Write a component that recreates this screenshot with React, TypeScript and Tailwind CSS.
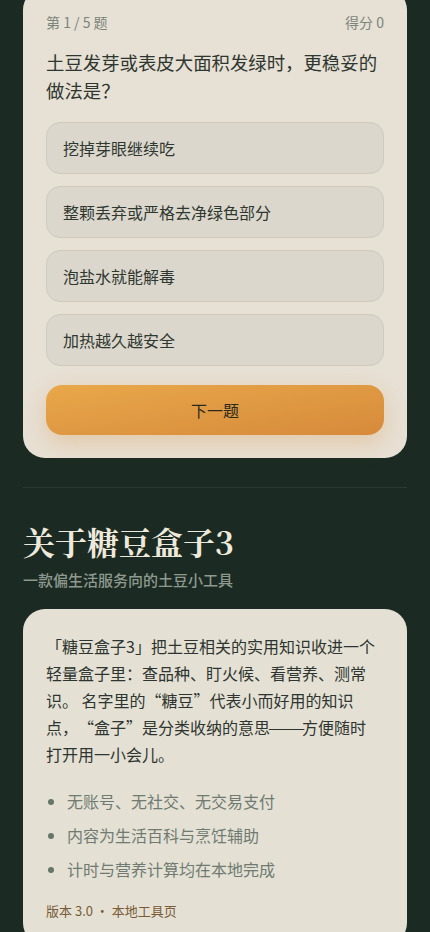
const options = ["挖掉芽眼继续吃", "整颗丢弃或严格去净绿色部分", "泡盐水就能解毒", "加热越久越安全"];

const points = ["无账号、无社交、无交易支付", "内容为生活百科与烹饪辅助", "计时与营养计算均在本地完成"];

const sans = { fontFamily: '"Noto Sans CJK SC", "Liberation Sans", sans-serif' };

// quotes take a full em box, as in the reference
function Open() {
  return <span className="inline-block w-[1em] text-right">“</span>;
}
function Close() {
  return <span className="inline-block w-[1em] text-left">”</span>;
}

export default function App() {
  return (
    <div
      className="min-h-[932px] overflow-hidden bg-[#1b2b23] px-[23px] pb-10"
      style={sans}
    >
      {/* Quiz card */}
      <section className="-mt-[12px] rounded-[22px] bg-[#e7e0d4] px-[23px] pb-[23px] pt-6">
        <div className="flex h-5 items-center justify-between text-[14px] text-[#7b857b]">
          <span>第 1 / 5 题</span>
          <span>得分 0</span>
        </div>
        <p className="mt-4 text-[18.4px] leading-[28px] text-[#2e3630]">
          土豆发芽或表皮大面积发绿时，更稳妥的做法是？
        </p>
        <div className="mt-[18px] flex flex-col gap-3">
          {options.map((o) => (
            <button
              key={o}
              type="button"
              className="flex h-[52px] items-center rounded-[14px] border border-[#cfcabe] bg-[#dcd7cc] px-4 text-left text-[16px] text-[#2f3731]"
            >
              {o}
            </button>
          ))}
        </div>
        <button
          type="button"
          className="mt-[19px] flex h-[50px] w-full items-center justify-center rounded-[16px] bg-gradient-to-br from-[#e9a84a] to-[#d68a3b] text-[16px] text-[#2a2a1e] shadow-[0_8px_22px_rgba(214,139,58,0.28)]"
        >
          下一题
        </button>
      </section>

      <div className="mt-[29px] h-px bg-[#2b3b32]" />

      {/* About */}
      <h1
        className="mt-[34px] text-[32px] font-bold leading-[38px] text-[#efe9dc]"
        style={{ fontFamily: '"Noto Serif CJK SC", "Liberation Serif", serif' }}
      >
        关于糖豆盒子3
      </h1>
      <p className="mt-[9px] text-[15px] font-medium leading-[22px] text-[#8e998f]">
        一款偏生活服务向的土豆小工具
      </p>

      <section className="mt-[18px] rounded-[22px] bg-[#e4e0d4] px-[23px] pb-6 pt-6">
        <p className="pr-[3px] text-[16px] leading-[27px] text-[#2e3530]">
          「糖豆盒子3」把土豆相关的实用知识收进一个轻量盒子里：查品种、盯火候、看营养、测常识。 名字里的<Open />糖豆<Close />代表小而好用的知识点，<Open />盒子<Close />是分类收纳的意思
          <span className="inline-block w-[2em] text-center">
            <span className="inline-block scale-x-[1.4]">——</span>
          </span>
          方便随时打开用一小会儿。
        </p>
        <ul className="mt-5 flex flex-col gap-[7px] pl-[21px] text-[16px] leading-[27px] text-[#6f7b71]">
          {points.map((p) => (
            <li key={p} className="list-disc marker:text-[#66756a]">
              {p}
            </li>
          ))}
        </ul>
        <p className="mt-[18px] text-[13px] leading-5 text-[#7a5b36]">版本 3.0 · 本地工具页</p>
      </section>
    </div>
  );
}
